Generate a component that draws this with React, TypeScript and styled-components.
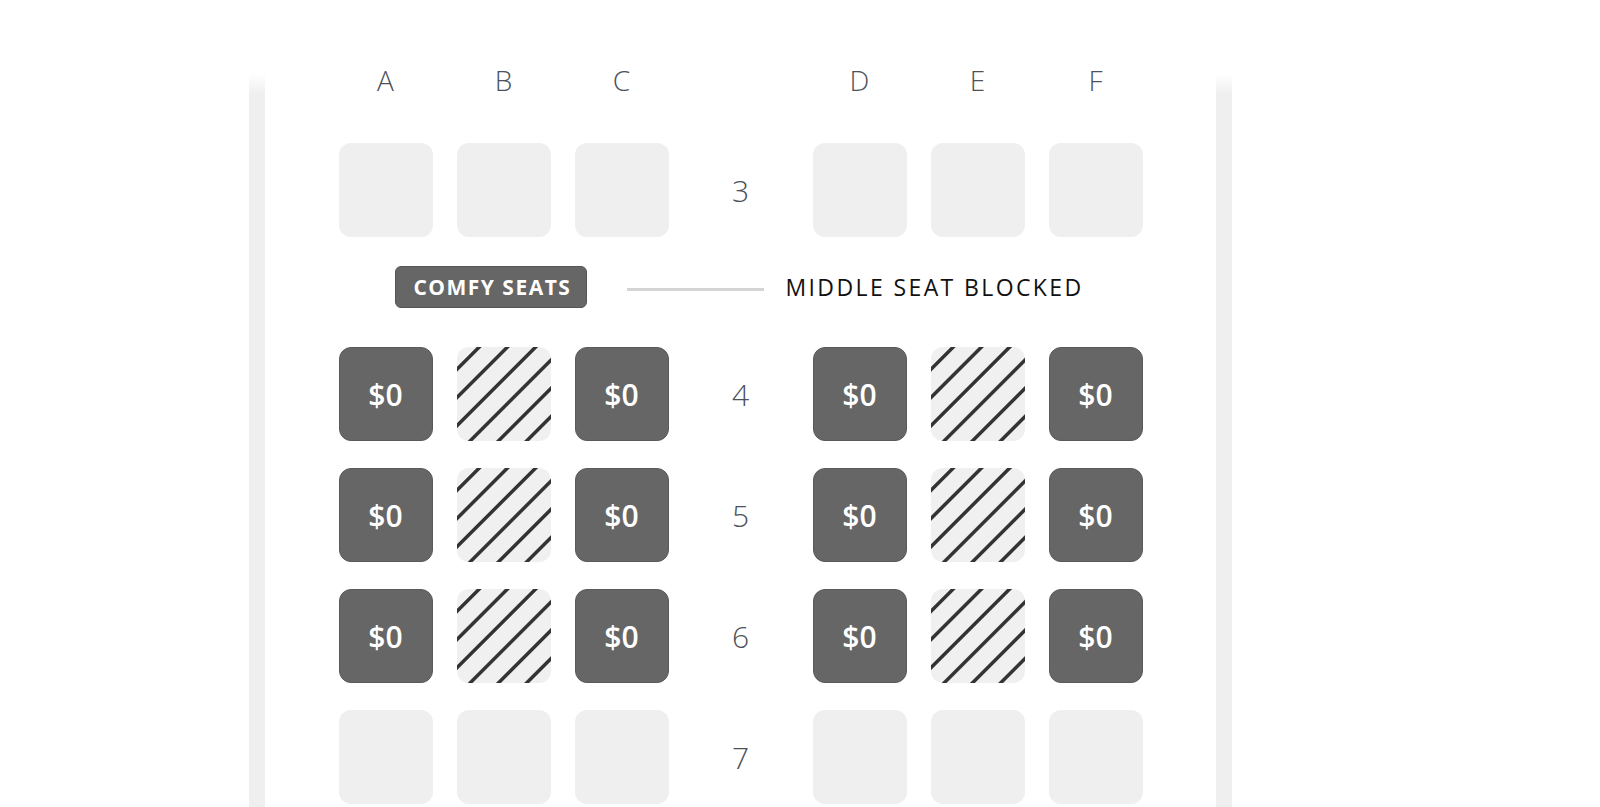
import React from 'react';
import styled, { createGlobalStyle, css } from 'styled-components';

type SeatKind = 'empty' | 'open' | 'blocked';

type Row = {
	number: number;
	seats: SeatKind[];
};

const GlobalStyle = createGlobalStyle`
	html, body {
		margin: 0;
		padding: 0;
		background: #ffffff;
		overflow: hidden;
	}
	body {
		font-family: 'Open Sans', 'Noto Sans', 'Liberation Sans', sans-serif;
	}
`;

const Page = styled.div`
	display: flex;
	padding: 55px 0 0 249px;
	min-height: 752px;
`;

const Fuselage = styled.section`
	display: flex;
	width: 983px;
	padding: 0 16px;
	box-sizing: border-box;
	background: linear-gradient(to bottom, #ffffff 18px, #efefef 40px);
`;

const Cabin = styled.div`
	flex: 1;
	display: flex;
	flex-direction: column;
	align-items: center;
	background: #ffffff;
	padding-top: 5px;

	& > * {
		flex-shrink: 0;
	}
`;

const SeatGrid = styled.div`
	display: grid;
	grid-template-columns: repeat(3, 94px) 96px repeat(3, 94px);
	column-gap: 24px;
`;

const ColumnHeader = styled(SeatGrid)`
	height: 40px;
	margin-bottom: 43px;
	align-items: center;
`;

const ColumnLetter = styled.span`
	text-align: center;
	font-size: 28px;
	font-weight: 300;
	line-height: 40px;
	color: #4c515a;
`;

const SeatRow = styled(SeatGrid)`
	height: 94px;
	margin-bottom: 27px;
`;

const RowNumber = styled.span`
	display: flex;
	align-items: center;
	justify-content: center;
	font-size: 30px;
	font-weight: 300;
	color: #4c515a;
`;

const blockedPattern = css`
	background-color: #f0f0f0;
	background-image: repeating-linear-gradient(
		-45deg,
		#f0f0f0 0px,
		#f0f0f0 15px,
		#333333 16px,
		#333333 18.5px,
		#f0f0f0 19.5px,
		#f0f0f0 20px
	);
`;

const Seat = styled.div<{ $kind: SeatKind }>`
	display: flex;
	align-items: center;
	justify-content: center;
	box-sizing: border-box;
	width: 94px;
	height: 94px;
	border-radius: 12px;
	font-size: 30px;
	font-weight: 600;
	color: #ffffff;
	${(p) =>
		p.$kind === 'open' &&
		css`
			background: #666666;
			border: 1px solid #5a5a5a;
		`}
	${(p) =>
		p.$kind === 'empty' &&
		css`
			background: #efefef;
		`}
	${(p) => p.$kind === 'blocked' && blockedPattern}
`;

const SectionDivider = styled.div`
	display: flex;
	align-items: flex-start;
	height: 83px;
	margin-left: -2px;
`;

const Badge = styled.span`
	display: inline-flex;
	align-items: center;
	height: 42px;
	margin-top: 2px;
	padding: 0 15px 0 17px;
	box-sizing: border-box;
	border-radius: 6px;
	border: 1px solid #555555;
	background: #666666;
	color: #ffffff;
	font-size: 21px;
	font-weight: 700;
	letter-spacing: 1.5px;
`;

const Rule = styled.span`
	width: 137px;
	height: 3px;
	margin: 24px 21px 0 40px;
	background: #d4d4d4;
`;

const SectionTitle = styled.span`
	margin-top: 2px;
	font-size: 23px;
	font-weight: 500;
	letter-spacing: 2.4px;
	line-height: 42px;
	color: #111111;
`;

const letters = ['A', 'B', 'C', 'D', 'E', 'F'];

const comfy: SeatKind[] = ['open', 'blocked', 'open', 'open', 'blocked', 'open'];
const empty: SeatKind[] = ['empty', 'empty', 'empty', 'empty', 'empty', 'empty'];

const frontRows: Row[] = [{ number: 3, seats: empty }];
const comfyRows: Row[] = [
	{ number: 4, seats: comfy },
	{ number: 5, seats: comfy },
	{ number: 6, seats: comfy },
	{ number: 7, seats: empty },
];

function SeatRowView({ row }: { row: Row }) {
	const cells = row.seats.map((kind, i) => (
		<Seat key={letters[i]} $kind={kind}>
			{kind === 'open' ? '$0' : null}
		</Seat>
	));
	return (
		<SeatRow>
			{cells.slice(0, 3)}
			<RowNumber>{row.number}</RowNumber>
			{cells.slice(3)}
		</SeatRow>
	);
}

export default function App() {
	return (
		<>
			<GlobalStyle />
			<Page>
				<Fuselage>
					<Cabin>
						<ColumnHeader>
							{letters.slice(0, 3).map((l) => (
								<ColumnLetter key={l}>{l}</ColumnLetter>
							))}
							<span />
							{letters.slice(3).map((l) => (
								<ColumnLetter key={l}>{l}</ColumnLetter>
							))}
						</ColumnHeader>
						{frontRows.map((r) => (
							<SeatRowView key={r.number} row={r} />
						))}
						<SectionDivider>
							<Badge>COMFY SEATS</Badge>
							<Rule />
							<SectionTitle>MIDDLE SEAT BLOCKED</SectionTitle>
						</SectionDivider>
						{comfyRows.map((r) => (
							<SeatRowView key={r.number} row={r} />
						))}
					</Cabin>
				</Fuselage>
			</Page>
		</>
	);
}
